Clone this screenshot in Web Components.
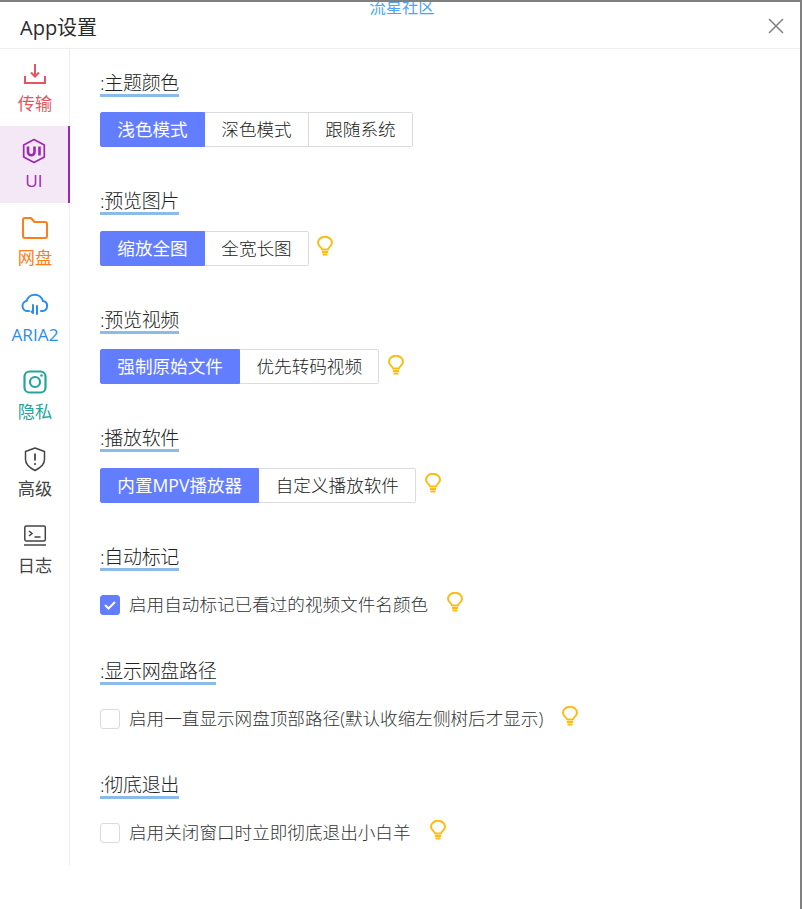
<!DOCTYPE html>
<html lang="zh"><head><meta charset="utf-8"><title>App设置</title>
<style>html,body{margin:0;background:#fff}body{width:802px;height:909px;overflow:hidden;font-family:"Open Sans","Noto Sans CJK SC",sans-serif}</style></head>
<body>
<app-dialog>
  <nav-item slot="nav" label="传输" color="#e4555f" icon="download"></nav-item>
  <nav-item slot="nav" label="UI" color="#9c27b0" icon="ui" active></nav-item>
  <nav-item slot="nav" label="网盘" color="#ff7d1a" icon="folder"></nav-item>
  <nav-item slot="nav" label="ARIA2" color="#2b8ced" icon="cloud"></nav-item>
  <nav-item slot="nav" label="隐私" color="#26a69a" icon="camera"></nav-item>
  <nav-item slot="nav" label="高级" color="#444" icon="shield"></nav-item>
  <nav-item slot="nav" label="日志" color="#444" icon="term"></nav-item>

  <set-section title=":主题颜色" h="118.4"><radio-group options="浅色模式|深色模式|跟随系统"></radio-group></set-section>
  <set-section title=":预览图片" h="118.4"><radio-group options="缩放全图|全宽长图" tip></radio-group></set-section>
  <set-section title=":预览视频" h="118.4"><radio-group options="强制原始文件|优先转码视频" tip></radio-group></set-section>
  <set-section title=":播放软件" h="118.4"><radio-group options="内置MPV播放器|自定义播放软件" tip></radio-group></set-section>
  <set-section title=":自动标记" h="114"><check-row checked label="启用自动标记已看过的视频文件名颜色"></check-row></set-section>
  <set-section title=":显示网盘路径" h="114"><check-row label="启用一直显示网盘顶部路径(默认收缩左侧树后才显示)"></check-row></set-section>
  <set-section title=":彻底退出" h="60"><check-row label="启用关闭窗口时立即彻底退出小白羊"></check-row></set-section>
</app-dialog>
<script>
const ICONS={
download:'<svg width="26" height="26" viewBox="0 0 26 26" fill="none" stroke="currentColor" stroke-width="2"><path d="M13 3v12"/><path d="M9 11.500l4 4 4-4"/><path d="M3 15v7h20v-7"/></svg>',
ui:'<svg width="26" height="26" viewBox="0 0 26 26" fill="none" stroke="currentColor"><path stroke-width="1.700" stroke-linejoin="round" d="M13 1.500l10.300 5.500v12l-10.300 5.500l-10.300-5.500v-12z"/><path stroke-width="2.600" d="M7 8.500v5.500a3 3 0 0 0 6.500 0v-5.500"/><path stroke-width="2.600" d="M18.500 8.500v9"/></svg>',
folder:'<svg width="28" height="24" viewBox="0 0 28 24" fill="none" stroke="currentColor" stroke-width="2"><path d="M2 4a2 2 0 0 1 2-2h6l3.500 4h10.500a2 2 0 0 1 2 2v12a2 2 0 0 1-2 2h-20a2 2 0 0 1-2-2z" stroke-linejoin="round"/></svg>',
cloud:'<svg width="28" height="24" viewBox="0 0 28 24" fill="none" stroke="currentColor" stroke-width="2" stroke-linecap="round"><path d="M8 18h-1.500a5 5 0 0 1-1-9.900a8.500 8.500 0 0 1 16.500 0a5 5 0 0 1-.5 9.900h-1.500"/><path d="M12 12v8M12 20l-1.500-1.500M16 21v-8"/></svg>',
camera:'<svg width="26" height="26" viewBox="0 0 26 26" fill="none" stroke="currentColor" stroke-width="2.200"><rect x="2.500" y="2.500" width="21" height="21" rx="5"/><circle cx="13" cy="13" r="5"/><circle cx="19.500" cy="6.500" r="1.300" fill="currentColor" stroke="none"/></svg>',
shield:'<svg width="26" height="26" viewBox="0 0 26 26" fill="none" stroke="currentColor" stroke-width="1.500"><path d="M13 2l9.500 3.500v8c0 5-4.500 8.500-9.500 11c-5-2.500-9.500-6-9.500-11v-8z" stroke-linejoin="round"/><path d="M13 7.500v7" stroke-width="1.800"/><circle cx="13" cy="18" r="1.100" fill="currentColor" stroke="none"/></svg>',
term:'<svg width="26" height="26" viewBox="0 0 26 26" fill="none" stroke="currentColor" stroke-width="1.500"><rect x="2.800" y="3" width="20.500" height="15" rx="1.500"/><path d="M7 8l3 2.500l-3 2.500M12.500 14h6"/><path d="M2 22h22"/></svg>'
};
const BULB='<svg width="16" height="20" viewBox="0 0 16 20" fill="none" stroke="#fdbc11" stroke-width="2"><path d="M5 13.500c0-2-4-3.200-4-6.800a7 6 0 0 1 14 0c0 3.600-4 4.800-4 6.800z" stroke-linejoin="round"/><path d="M5 16h6M5.500 18.500h5"/></svg>';
const FONT='"Open Sans","Noto Sans CJK SC",sans-serif';
function shadow(el,html){const r=el.attachShadow({mode:'open'});r.innerHTML=html;return r}

customElements.define('app-dialog',class extends HTMLElement{constructor(){super();shadow(this,`<style>
:host{display:block;box-sizing:border-box;width:802px;height:909px;position:relative;border-top:2px solid #808080;border-right:2px solid #808080;background:#fff;color:#333;font-family:${FONT};font-weight:300;overflow:hidden}
header{height:47px;box-sizing:border-box;border-bottom:1px solid #eceef1;padding:12px 0 0 20px;font-size:20px;line-height:28px;color:#2b2b2b;display:flex;justify-content:space-between;font-weight:400}
.x{width:16px;height:16px;margin:4px 16px 0 0}
.brand{position:absolute;top:-5px;left:369.500px;font-size:16.300px;line-height:20px;color:#4ba6f5;font-weight:400}
main{display:flex;height:816px}
aside{width:70px;box-sizing:border-box;border-right:1px solid #eceef1;display:flex;flex-direction:column}
section{padding:23px 0 0 30px;flex:1}
</style><div class="brand">流星社区</div><header><span>App设置</span><svg class="x" viewBox="0 0 16 16" stroke="#808080" stroke-width="1.500"><path d="M1 1l14 14M15 1l-14 14"/></svg></header><main><aside><slot name="nav"></slot></aside><section><slot></slot></section></main>`)}});

customElements.define('nav-item',class extends HTMLElement{connectedCallback(){const c=this.getAttribute('color'),a=this.hasAttribute('active');shadow(this,`<style>
:host{display:flex;flex-direction:column;align-items:center;box-sizing:border-box;width:70px;height:77px;padding-top:12px;color:${c};${a?'background:#f4e8f6;border-right:2px solid #9c27b0;':''}}
.i{height:26px;display:flex;align-items:center;justify-content:center}
.l{margin-top:5px;font-size:17.200px;line-height:24px;white-space:nowrap;font-weight:400}
</style><div class="i">${ICONS[this.getAttribute('icon')]}</div><div class="l">${this.getAttribute('label')}</div>`)}});

customElements.define('set-section',class extends HTMLElement{connectedCallback(){shadow(this,`<style>
:host{display:block;box-sizing:border-box;height:${this.getAttribute('h')}px}
.t{display:inline-block;font-size:19px;letter-spacing:-.3px;line-height:22px;color:#222;border-bottom:3px solid #8abbe9;box-sizing:border-box;height:25px;vertical-align:top}
.b{margin-top:15.400px}
</style><div class="t">${this.getAttribute('title')}</div><div class="b"><slot></slot></div>`)}});

customElements.define('radio-group',class extends HTMLElement{connectedCallback(){const o=this.getAttribute('options').split('|');shadow(this,`<style>
:host{display:flex;align-items:flex-start}
.g{display:flex}
.o{height:35px;box-sizing:border-box;padding:0 16.300px;font-size:17.600px;line-height:33px;border:1px solid #d9dbe0;border-left:0;color:#222;background:#fff;white-space:nowrap}
.o.on{background:#637dff;border-color:#637dff;border-left:1px solid #637dff;color:#fff;border-radius:2px 0 0 2px;font-weight:400}
.o:last-child{border-radius:0 2px 2px 0}
.tip{margin:5.500px 0 0 8.500px;height:20px}
</style><div class="g">${o.map((s,i)=>`<div class="o${i?'':' on'}">${s}</div>`).join('')}</div>${this.hasAttribute('tip')?`<div class="tip">${BULB}</div>`:''}`)}});

customElements.define('check-row',class extends HTMLElement{connectedCallback(){const c=this.hasAttribute('checked');shadow(this,`<style>
:host{display:flex;align-items:flex-start;padding-top:9px;height:34px;box-sizing:border-box}
.c{width:20px;height:20px;box-sizing:border-box;border-radius:3px;border:1px solid ${c?'#637dff':'#d9dbe0'};background:${c?'#637dff':'#fff'};display:flex;align-items:center;justify-content:center}
.l{margin-left:9px;margin-top:-8px;font-size:17.600px;line-height:34px;color:#333;white-space:nowrap}
.tip{margin:-3px 0 0 19px;height:20px}
</style><div class="c">${c?'<svg width="16" height="16" viewBox="0 0 16 16" fill="none" stroke="#fff" stroke-width="2"><path d="M3 8l3.500 3.500l6.500-6.500"/></svg>':''}</div><div class="l">${this.getAttribute('label')}</div><div class="tip">${BULB}</div>`)}});
</script>
</body></html>
